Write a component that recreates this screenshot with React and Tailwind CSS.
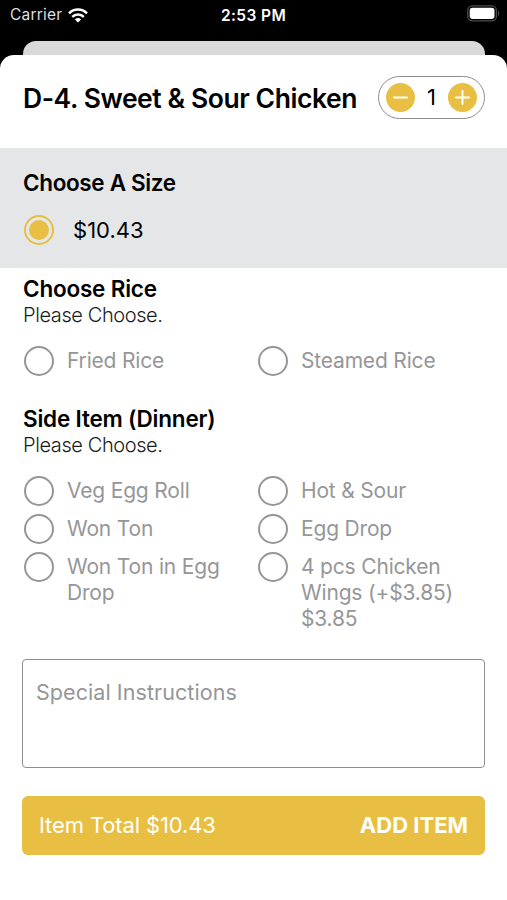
import { useState } from "react";

const PRICE = 10.43;

const groups = [
  {
    title: "Choose Rice",
    options: ["Fried Rice", "Steamed Rice"],
  },
  {
    title: "Side Item (Dinner)",
    options: [
      "Veg Egg Roll",
      "Hot & Sour",
      "Won Ton",
      "Egg Drop",
      "Won Ton in Egg Drop",
      "4 pcs Chicken Wings (+$3.85) $3.85",
    ],
  },
];

function WifiIcon() {
  return (
    <svg width="20" height="15" viewBox="0 0 20 15" fill="none" stroke="white" strokeWidth="2.5">
      <path d="M1 5.3a12.8 12.8 0 0 1 18 0" />
      <path d="M4.2 8.9a8.3 8.3 0 0 1 11.6 0" />
      <path d="M10 14.6l-3.1-3.2a4.5 4.5 0 0 1 6.2 0z" fill="white" stroke="none" />
    </svg>
  );
}

function BatteryIcon() {
  return (
    <svg width="33" height="17" viewBox="0 0 33 17" fill="none">
      <rect x="0.8" y="0.8" width="28.6" height="15" rx="4.5" stroke="#4c4c4c" strokeWidth="1.3" />
      <rect x="2.7" y="2.7" width="24.8" height="11.2" rx="2.8" fill="white" />
      <path d="M31 5.8c1.7.7 1.7 4.4 0 5.1z" fill="#4c4c4c" />
    </svg>
  );
}

function StatusBar() {
  return (
    <div className="grid h-[41px] grid-cols-3 items-start pt-[5px] text-[15.5px] leading-5 text-white">
      <div className="flex items-center gap-1.5 pl-2.5">
        <span className="tracking-[0.2px] text-[#dedede]">Carrier</span>
        <WifiIcon />
      </div>
      <span className="pt-px text-center font-semibold tracking-[0.4px]">2:53 PM</span>
      <div className="flex justify-end pr-[7px]">
        <BatteryIcon />
      </div>
    </div>
  );
}

function QuantityButton({ label, onClick, plus }) {
  return (
    <button
      aria-label={label}
      onClick={onClick}
      className="flex size-[29px] items-center justify-center rounded-full bg-[#e8bf42]"
    >
      <svg width="15" height="15" viewBox="0 0 15 15" stroke="white" strokeWidth="1.9" strokeLinecap="round">
        <path d="M1 7.5h13" />
        {plus && <path d="M7.5 1v13" />}
      </svg>
    </button>
  );
}

function Option({ label, checked, onClick }) {
  return (
    <button onClick={onClick} className="flex items-start gap-[13px] pl-px text-left">
      <span className="flex size-[30px] shrink-0 items-center justify-center rounded-full border-2 border-[#969696]">
        {checked && <span className="size-5 rounded-full bg-[#e8bf42]" />}
      </span>
      <span className="w-[160px] pt-[2px] text-[21px] leading-[26px] tracking-[-0.18px] text-[#969698]">
        {label}
      </span>
    </button>
  );
}

function App() {
  const [quantity, setQuantity] = useState(1);
  const [selected, setSelected] = useState({});
  const [notes, setNotes] = useState("");

  return (
    <div className="flex h-[900px] w-[507px] flex-col overflow-hidden bg-black font-[Inter,sans-serif] text-black">
      <StatusBar />
      <div className="ml-[23px] mr-[22px] h-[14px] shrink-0 rounded-t-[13px] bg-[#d9d9d9]" />

      <div className="flex-1 rounded-t-[14px] bg-white">
        <div className="flex h-[93px] items-start justify-between pl-[23px] pr-[22px] pt-[21px]">
          <h1 className="text-[26.5px] font-semibold leading-[44px] tracking-[-0.43px] whitespace-nowrap">
            D-4. Sweet & Sour Chicken
          </h1>
          <div className="flex h-[43px] w-[107px] items-center justify-between rounded-full border-[1.5px] border-[#8e8e8e] px-[7px]">
            <QuantityButton label="Decrease" onClick={() => setQuantity(Math.max(1, quantity - 1))} />
            <span className="text-[22px]">{quantity}</span>
            <QuantityButton label="Increase" plus onClick={() => setQuantity(quantity + 1)} />
          </div>
        </div>

        <div className="h-[120px] bg-[#e4e6e8] px-[23px] pt-[21px]">
          <h2 className="text-[22.5px] font-semibold leading-7 tracking-[-0.35px]">Choose A Size</h2>
          <div className="mt-[18px] flex items-center gap-[19px] pl-px">
            <span className="flex size-[30px] items-center justify-center rounded-full border-2 border-[#e8bf42]">
              <span className="size-5 rounded-full bg-[#e8bf42]" />
            </span>
            <span className="text-[22px] leading-7">${PRICE}</span>
          </div>
        </div>

        <div className="flex flex-col gap-[29px] px-[23px] pt-[7px]">
          {groups.map((group) => (
            <div key={group.title}>
              <h2 className="text-[22.5px] font-semibold leading-[27px] tracking-[-0.2px]">{group.title}</h2>
              <p className="text-[20px] font-light leading-[26px] tracking-[-0.4px] text-[#1c1c1c]">Please Choose.</p>
              <div className="mt-[18px] grid grid-cols-[234px_1fr] gap-y-2">
                {group.options.map((option) => (
                  <Option
                    key={option}
                    label={option}
                    checked={selected[group.title] === option}
                    onClick={() => setSelected({ ...selected, [group.title]: option })}
                  />
                ))}
              </div>
            </div>
          ))}
        </div>

        <div className="flex flex-col gap-7 pl-[22px] pr-[22px] pt-[27px]">
          <textarea
            placeholder="Special Instructions"
            value={notes}
            onChange={(e) => setNotes(e.target.value)}
            className="block h-[109px] w-full resize-none rounded-[4px] border-[1.5px] border-[#8e8e8e] px-[13px] pt-[19px] text-[21.5px] leading-[26px] tracking-[0.07px] placeholder:text-[#969698] focus:outline-none"
          />
          <button className="flex h-[59px] items-center justify-between rounded-[6px] bg-[#e8bf42] px-[17px] text-[22px] text-white">
            <span className="tracking-[-0.12px]">Item Total ${(PRICE * quantity).toFixed(2)}</span>
            <span className="font-bold">ADD ITEM</span>
          </button>
        </div>
      </div>
    </div>
  );
}

export default App;
